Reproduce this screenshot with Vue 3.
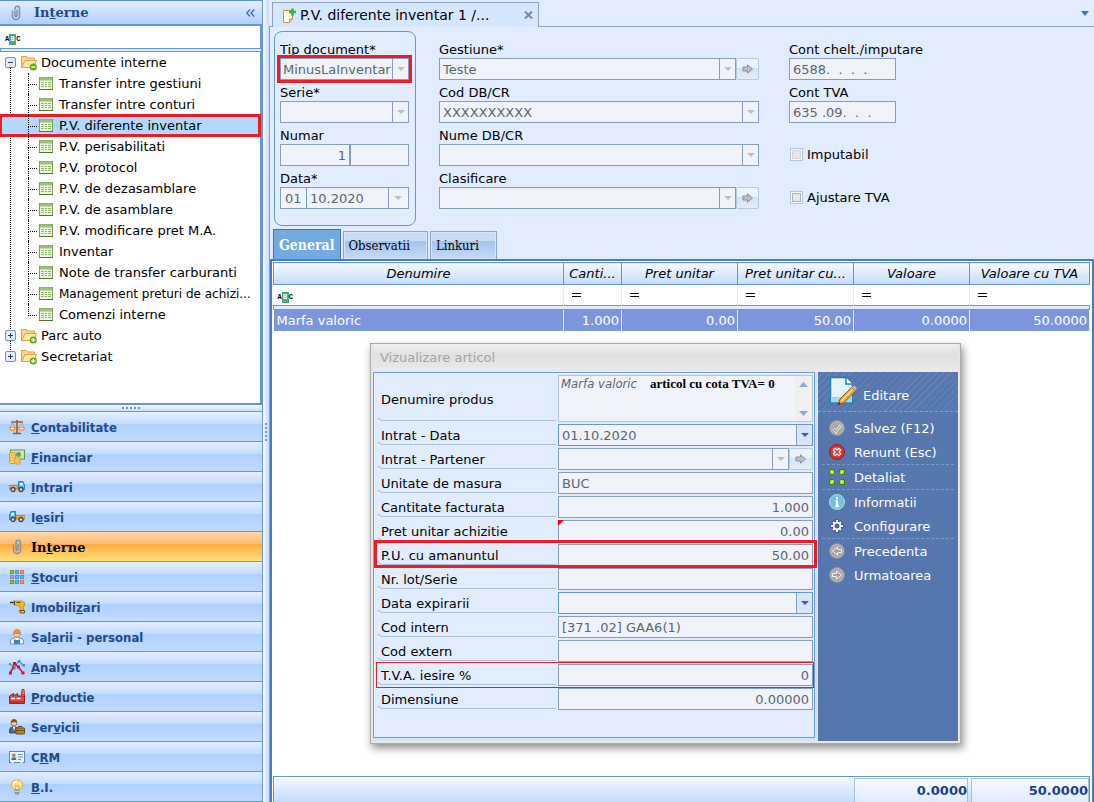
<template>
  <div class="app">
    <aside class="sidebar">
      <header class="side-head">
        <svg class="icon" viewBox="0 0 16 16" v-html="icons.clip"></svg>
        <h2>In<u>t</u>erne</h2>
        <button type="button" class="collapse" aria-label="Restrange">
          <svg width="9" height="8" viewBox="0 0 9 8" fill="none" stroke="#3a69ad" stroke-width="1.300"><path d="M4 .5.8 4 4 7.500M8.200.5 5 4l3.200 3.500" /></svg>
        </button>
      </header>
      <div class="side-filter"><span class="abc">A<b>B</b>C</span></div>
      <div class="double-line"></div>

      <nav class="tree">
        <ul class="roots">
          <li v-for="root in tree" :key="root.name" class="root">
            <button type="button" class="node root-node">
              <svg class="expander" viewBox="0 0 11 11">
                <rect x=".5" y=".5" width="10" height="10" rx="1.500" fill="#e3ebf6" stroke="#7890b8" />
                <path d="M3 5.500h5" stroke="#23406f" />
                <path v-if="!root.open" d="M5.500 3v5" stroke="#23406f" />
              </svg>
              <svg class="folder" viewBox="0 0 16 16">
                <path d="M.5 12.500V1.500h5l1 1.500h7v3" fill="#fbd98a" stroke="#d7a04a" />
                <path d="M.8 12.500 4 5.500h11.500l-3 7z" fill="#fde9b0" stroke="#d7a04a" />
                <circle cx="12.300" cy="12" r="3.600" fill="#62a80d" />
                <path d="M10.200 12h4.200" stroke="#fff" stroke-width="1.400" />
                <path v-if="!root.open" d="M12.300 9.900v4.200" stroke="#fff" stroke-width="1.400" />
              </svg>
              <span>{{ root.name }}</span>
            </button>
            <ul v-if="root.open" class="leaves">
              <li v-for="leaf in root.items" :key="leaf" class="leaf">
                <button type="button" class="node leaf-node" :class="{ selected: leaf === current }">
                  <svg class="sheet" viewBox="0 0 14 13">
                    <rect x=".5" y=".5" width="13" height="12" fill="#eef6e2" stroke="#7ba354" />
                    <path d="M1 2h12" stroke="#9cc178" stroke-width="3" />
                    <path d="M2 5.500h3m1 0h2m1 0h3M2 7.500h3m1 0h2m1 0h3M2 9.500h3m1 0h2m1 0h3" stroke="#8db868" />
                    <path d="M0 12.500h14" stroke="#4f7528" />
                  </svg>
                  <span class="leaf-text" :class="{ long: leaf.length > 28 }">{{ leaf }}</span>
                </button>
              </li>
            </ul>
          </li>
        </ul>
      </nav>

      <div class="grip"><i v-for="n in 5" :key="n"></i></div>

      <nav class="modules">
        <button
          v-for="m in modules"
          :key="m.icon"
          type="button"
          class="module"
          :class="{ active: m.icon === 'clip' }"
        >
          <svg class="icon" viewBox="0 0 16 16" v-html="icons[m.icon]"></svg>
          <span>{{ m.text[0] }}<u>{{ m.text[1] }}</u>{{ m.text[2] }}</span>
        </button>
      </nav>
    </aside>

    <div class="splitter"><i v-for="n in 5" :key="n"></i></div>

    <main class="main">
      <div class="doc-tabs">
        <div class="doc-tab">
          <svg width="13" height="15" viewBox="0 0 13 15">
            <path d="M.5 2.500h9V11l-3 3.500h-6z" fill="#fffdf2" stroke="#c8933a" />
            <path d="M6.500 14.500V11h3" fill="#f6d38c" stroke="#c8933a" />
            <path d="M9.500.5v7M6 4h7" stroke="#2fbb3a" stroke-width="2.600" />
          </svg>
          <span>P.V. diferente inventar 1 /...</span>
          <button type="button" class="close" aria-label="Inchide">
            <svg width="9" height="8" viewBox="0 0 9 8"><path d="m1 .5 7 7M8 .5l-7 7" stroke="#7b8794" stroke-width="2" /></svg>
          </button>
        </div>
        <button type="button" class="tab-menu" aria-label="Lista ferestre">
          <svg width="8" height="5" viewBox="0 0 8 5"><path d="M0 0h8L4 5z" fill="#3f74bd" /></svg>
        </button>
      </div>

      <section class="doc">
        <form class="doc-form" @submit.prevent>
          <div class="group">
            <div class="field">
              <label for="tip">Tip document*</label>
              <div class="box marked">
                <select id="tip" disabled><option>MinusLaInventar</option></select>
                <span class="arrow"></span>
              </div>
            </div>
            <div class="field">
              <label for="serie">Serie*</label>
              <div class="box">
                <select id="serie" disabled><option></option></select>
                <span class="arrow"></span>
              </div>
            </div>
            <div class="field">
              <label for="numar">Numar</label>
              <div class="box">
                <input id="numar" class="num-a" value="1" disabled />
                <input class="num-b" aria-label="Numar, sufix" disabled />
              </div>
            </div>
            <div class="field">
              <label for="data">Data*</label>
              <div class="box">
                <input id="data" class="day" value="01" disabled />
                <input class="month" aria-label="Luna si anul" value="10.2020" disabled />
                <button type="button" class="arrow" aria-label="Alege data" disabled></button>
              </div>
            </div>
          </div>

          <div class="partner">
            <div v-for="f in partner" :key="f.id" class="field">
              <label :for="f.id">{{ f.label }}</label>
              <div class="with-go">
                <div class="box">
                  <select :id="f.id" disabled><option>{{ f.value }}</option></select>
                  <span class="arrow"></span>
                </div>
                <button v-if="f.go" type="button" class="go" :aria-label="'Deschide ' + f.label" disabled>
                  <svg width="12" height="10" viewBox="0 0 12 10"><path d="M1 3h4.500V.8L10.500 5l-5 4.200V7H1z" fill="#bcc0c6" stroke="#888e97" /></svg>
                </button>
              </div>
            </div>
          </div>

          <div class="accounts">
            <div class="field">
              <label for="cont1">Cont chelt./imputare</label>
              <div class="box"><input id="cont1" value="6588.  .  .  ." disabled /></div>
            </div>
            <div class="field">
              <label for="cont2">Cont TVA</label>
              <div class="box"><input id="cont2" value="635 .09.  .  ." disabled /></div>
            </div>
            <div class="field check"><label><input type="checkbox" disabled />Imputabil</label></div>
            <div class="field check"><label><input type="checkbox" />Ajustare TVA</label></div>
          </div>
        </form>

        <div class="tabs">
          <button type="button" class="tab on">General</button>
          <button type="button" class="tab">Observatii</button>
          <button type="button" class="tab">Linkuri</button>
        </div>

        <div class="grid">
          <table>
            <colgroup>
              <col />
              <col class="c-qty" />
              <col v-for="n in 3" :key="n" class="c-num" />
              <col class="c-last" />
            </colgroup>
            <thead>
              <tr>
                <th v-for="c in columns" :key="c">{{ c }}</th>
              </tr>
            </thead>
            <tbody>
              <tr class="filter">
                <td><span class="abc">A<b>B</b>C</span></td>
                <td v-for="n in 5" :key="n"><span class="eq"></span></td>
              </tr>
              <tr class="sep"><td colspan="6"></td></tr>
              <tr class="data">
                <td v-for="(v, i) in row" :key="i">{{ v }}</td>
              </tr>
            </tbody>
          </table>
          <div class="totals">
            <span class="total">0.0000</span>
            <span class="total last">50.0000</span>
          </div>
        </div>
      </section>

      <div class="dialog" role="dialog" aria-labelledby="dlg-title">
        <h3 id="dlg-title">Vizualizare articol</h3>
        <div class="dlg-body">
          <form class="dlg-form" @submit.prevent>
            <div
              v-for="f in fields"
              :key="f.id"
              class="row"
              :class="[f.mark, { tall: f.type === 'area' }]"
            >
              <label :for="f.id">{{ f.label }}</label>
              <div v-if="f.type === 'area'" class="box area">
                <textarea :id="f.id" value="Marfa valoric" disabled></textarea>
                <span class="note">articol cu cota TVA= 0</span>
                <span class="scroll">
                  <svg width="9" height="5" viewBox="0 0 9 5"><path d="M0 5h9L4.500 0z" fill="#93a5cd" /></svg>
                  <svg width="9" height="5" viewBox="0 0 9 5"><path d="M0 0h9L4.500 5z" fill="#93a5cd" /></svg>
                </span>
              </div>
              <div v-else-if="f.type === 'date'" class="box date">
                <input :id="f.id" :value="f.value" readonly />
                <button type="button" class="arrow" :aria-label="'Alege ' + f.label"></button>
              </div>
              <div v-else-if="f.type === 'select'" class="with-go">
                <div class="box">
                  <select :id="f.id" disabled><option></option></select>
                  <span class="arrow"></span>
                </div>
                <button type="button" class="go wide" aria-label="Deschide partener" disabled>
                  <svg width="12" height="10" viewBox="0 0 12 10"><path d="M1 3h4.500V.8L10.500 5l-5 4.200V7H1z" fill="#bcc0c6" stroke="#888e97" /></svg>
                </button>
              </div>
              <div v-else class="box" :class="{ flagged: f.flag }">
                <input :id="f.id" :class="{ right: f.num }" :value="f.value" readonly />
              </div>
            </div>
          </form>

          <div class="actions">
            <button type="button" class="edit">
              <svg width="28" height="30" viewBox="0 0 28 30">
                <path d="M1.500 1.500h16l6 6V27h-22z" fill="#e2f3fa" stroke="#1c82b5" stroke-width="1.500" />
                <path d="M2.500 21h20v5h-20z" fill="#a9d6ec" />
                <path d="M17 1.500V8h6.500" fill="#fff" stroke="#1c82b5" stroke-width="1.500" />
                <path d="m9 29 2-6L22.500 11.500l4 3.500L14.500 27z" fill="#f9a72b" stroke="#8c5a20" />
                <path d="m12.500 25 11.500-12" stroke="#ffdf8a" stroke-width="1.500" />
                <path d="m22.500 11.500 2-2q2.500 0 3.500 3l-1.500 2.500z" fill="#d9a3c0" stroke="#9d7691" stroke-width=".6" />
                <path d="m9 29 1-3 2 2z" fill="#333" />
              </svg>
              <span>Editare</span>
            </button>
            <button
              v-for="a in actions"
              :key="a.text"
              type="button"
              class="action"
              :class="{ split: a.split }"
            >
              <svg class="icon" viewBox="0 0 16 16" v-html="icons[a.icon]"></svg>
              <span>{{ a.text }}</span>
            </button>
          </div>
        </div>
      </div>
    </main>
  </div>
</template>

<script setup>
import { ref } from 'vue';

const current = ref('P.V. diferente inventar');

const tree = [
  {
    name: 'Documente interne',
    open: true,
    items: [
      'Transfer intre gestiuni',
      'Transfer intre conturi',
      'P.V. diferente inventar',
      'P.V. perisabilitati',
      'P.V. protocol',
      'P.V. de dezasamblare',
      'P.V. de asamblare',
      'P.V. modificare pret M.A.',
      'Inventar',
      'Note de transfer carburanti',
      'Management preturi de achizi...',
      'Comenzi interne'
    ]
  },
  { name: 'Parc auto', open: false },
  { name: 'Secretariat', open: false }
];

const modules = [
  { icon: 'scales', text: ['', 'C', 'ontabilitate'] },
  { icon: 'money', text: ['', 'F', 'inanciar'] },
  { icon: 'truckIn', text: ['', 'I', 'ntrari'] },
  { icon: 'truckOut', text: ['I', 'e', 'siri'] },
  { icon: 'clip', text: ['In', 't', 'erne'] },
  { icon: 'blocks', text: ['', 'S', 'tocuri'] },
  { icon: 'drill', text: ['Imobili', 'z', 'ari'] },
  { icon: 'worker', text: ['Sa', 'l', 'arii - personal'] },
  { icon: 'chart', text: ['', 'A', 'nalyst'] },
  { icon: 'factory', text: ['', 'P', 'roductie'] },
  { icon: 'service', text: ['Ser', 'v', 'icii'] },
  { icon: 'card', text: ['C', 'R', 'M'] },
  { icon: 'bulb', text: ['', 'B', '.I.'] }
];

const partner = [
  { id: 'gestiune', label: 'Gestiune*', value: 'Teste', go: true },
  { id: 'cod', label: 'Cod DB/CR', value: 'XXXXXXXXXX' },
  { id: 'nume', label: 'Nume DB/CR', value: '' },
  { id: 'clasificare', label: 'Clasificare', value: '', go: true }
];

const columns = ['Denumire', 'Canti...', 'Pret unitar', 'Pret unitar cu...', 'Valoare', 'Valoare cu TVA'];
const row = ['Marfa valoric', '1.000', '0.00', '50.00', '0.0000', '50.0000'];

const fields = [
  { id: 'f-den', label: 'Denumire produs', type: 'area' },
  { id: 'f-data', label: 'Intrat - Data', type: 'date', value: '01.10.2020' },
  { id: 'f-part', label: 'Intrat - Partener', type: 'select' },
  { id: 'f-um', label: 'Unitate de masura', value: 'BUC' },
  { id: 'f-cant', label: 'Cantitate facturata', value: '1.000', num: true },
  { id: 'f-pret', label: 'Pret unitar achizitie', value: '0.00', num: true, flag: true },
  { id: 'f-pu', label: 'P.U. cu amanuntul', value: '50.00', num: true, mark: 'mark-thick' },
  { id: 'f-lot', label: 'Nr. lot/Serie', value: '' },
  { id: 'f-exp', label: 'Data expirarii', type: 'date', value: '' },
  { id: 'f-int', label: 'Cod intern', value: '[371 .02] GAA6(1)' },
  { id: 'f-ext', label: 'Cod extern', value: '' },
  { id: 'f-tva', label: 'T.V.A. iesire %', value: '0', num: true, mark: 'mark-thin' },
  { id: 'f-dim', label: 'Dimensiune', value: '0.00000', num: true }
];

const actions = [
  { icon: 'ok', text: 'Salvez (F12)' },
  { icon: 'cancel', text: 'Renunt (Esc)', split: true },
  { icon: 'expand', text: 'Detaliat', split: true },
  { icon: 'info', text: 'Informatii' },
  { icon: 'gear', text: 'Configurare', split: true },
  { icon: 'prev', text: 'Precedenta' },
  { icon: 'next', text: 'Urmatoarea' }
];

const disc = '<circle cx="8" cy="8" r="7.500" fill="#b9b9b9" stroke="#8e8e8e"/><circle cx="8" cy="8" r="6" fill="#a9a9a9"/>';

const icons = {
  clip: '<path d="M9 4.500v6a1 1 0 0 1-2 0V5.500M4.500 5.500v5.500a3.500 3.500 0 0 0 7 0V3.500a2.200 2.200 0 0 0-4.500 0V5" fill="none" stroke="#8492a6" stroke-width="1.500"/>',
  scales: '<path d="M8 1v13" stroke="#a3552a" stroke-width="1.600"/><path d="M2 3h12M4 14.500h8" stroke="#a3552a" stroke-width="1.300"/><path d="M3.500 3 1 9m2.500-6L6 9m6.500-6L10 9m2.500-6L15 9" stroke="#c98a5a" stroke-width=".8"/><path d="M.5 8.500h6q0 3.500-3 3.500t-3-3.500zM9.500 8.500h6q0 3.500-3 3.500t-3-3.500z" fill="#fcb83c" stroke="#d98a1c" stroke-width=".6"/><path d="M2 9.500h3M11 9.500h3" stroke="#fff0c0"/>',
  money: '<rect x="1.500" y="1" width="14" height="9" fill="#cfe6b4" stroke="#5f9440"/><circle cx="9.500" cy="5.500" r="2.500" fill="#6da14c"/><rect x=".5" y="3.500" width="6" height="11" rx="1" fill="#fbd065" stroke="#dc9a30"/><rect x="5.500" y="9" width="5.500" height="6" rx="1" fill="#fbd065" stroke="#dc9a30"/><path d="M1 6h5M1 8.500h5M1 11h4M6 11.500h5M6 13.500h5" stroke="#e8a83c" stroke-width=".8"/>',
  truckIn: '<path d="M0 6.500h9v3.500H0z" fill="#f8a742" stroke="#bd7624" stroke-width=".8"/><path d="M9.500 10.500v-8h4.500l1.500 3.500v4.500z" fill="#5bb5ea" stroke="#2f7fb8"/><path d="M11 4h2.500l.8 2.500H11z" fill="#e4f5ff"/><circle cx="4" cy="10.500" r="2" fill="#ddd" stroke="#444" stroke-width="1.300"/><circle cx="12" cy="10.500" r="2" fill="#ddd" stroke="#444" stroke-width="1.300"/>',
  truckOut: '<path d="M7 6.500h9v3.500H7z" fill="#f8a742" stroke="#bd7624" stroke-width=".8"/><path d="M6.500 10.500v-8H2L.5 6v4.500z" fill="#5bb5ea" stroke="#2f7fb8"/><path d="M5 4H2.500l-.8 2.500H5z" fill="#e4f5ff"/><circle cx="4" cy="10.500" r="2" fill="#ddd" stroke="#444" stroke-width="1.300"/><circle cx="12" cy="10.500" r="2" fill="#ddd" stroke="#444" stroke-width="1.300"/>',
  blocks: '<g fill="#fff" stroke-width="1.500"><path d="M1.700 1.700h2.600v2.600H1.700zM1.700 11.700h2.600v2.600H1.700z" stroke="#7c9c12"/><path d="M6.700 1.700h2.600v2.600H6.700zM6.700 6.700h2.600v2.600H6.700zM11.700 6.700h2.600v2.600h-2.600zM6.700 11.700h2.600v2.600H6.700z" stroke="#3f97dc"/><path d="M11.700 1.700h2.600v2.600h-2.600zM11.700 11.700h2.600v2.600h-2.600z" stroke="#ee6a45"/><path d="M1.700 6.700h2.600v2.600H1.700z" stroke="#9a77e0"/></g>',
  drill: '<path d="M1 3.500h4" stroke="#333" stroke-width="1.500"/><path d="M4 2h9l2.500 1.500v3l-1.500 1 1 4h-3L10.500 7 5 6z" fill="#fcb813" stroke="#a96d00" stroke-width=".6"/><path d="M5.500 2v4M7.500 3.500h4" stroke="#5a4308"/><path d="M10.500 11.500h5v2.500h-4z" fill="#f6c231" stroke="#6c5212"/>',
  worker: '<path d="M1.500 15v-3q0-3 4-3h5q4 0 4 3v3z" fill="#edf1f5" stroke="#7a8ca0"/><path d="M5 10.500h6v4.500H5z" fill="#3483c5"/><path d="M6.500 9h3v2h-3z" fill="#fff"/><circle cx="8" cy="5" r="3.200" fill="#ffd29c" stroke="#b9722c" stroke-width=".6"/><path d="M4.500 4.500q0-4 3.500-4t3.500 4z" fill="#f8952e" stroke="#bf651a" stroke-width=".6"/>',
  chart: '<path d="m1.500 12 4-3 4-7 2.500 2 2.500 2.500M1 5l4 3" fill="none" stroke="#4a91c2" stroke-width="1.300"/><path d="M9 1h2.500v2.500H9zM4 8h2.500v2.500H4zM13.500 5H16v2.500h-2.500zM0 4h2v2H0z" fill="#4a91c2"/><path d="m1.500 14 4-9.500L9.500 8l4.500 6" fill="none" stroke="#d41717" stroke-width="1.500"/><path d="M0 12.500h3v3H0zM4 3h3v3H4zM8 6.500h3v3H8zM12.500 12.500h3v3h-3z" fill="#d41717"/>',
  factory: '<path d="M12.500 7.500 13 .5h2l.5 7" fill="#f7b4ad" stroke="#b3261d"/><path d="M13 3h2.500M13 5.500h2.500" stroke="#d43a2f"/><path d="M.5 14.500V7l4-2.500V7l4-2.500V7h7v7.500z" fill="#e24b40" stroke="#a51f18"/><path d="M2 9.500h4m1.500 0h4" stroke="#fff" stroke-width="1.600"/><path d="M1 13h14" stroke="#b82a20" stroke-width="1.500"/>',
  service: '<path d="M.5 14v-3q0-3 3.500-3h2q3 0 3 3v3z" fill="#56657a" stroke="#354255" stroke-width=".8"/><path d="m4 8 1 4 1.200-4z" fill="#fff"/><circle cx="5" cy="4" r="3" fill="#f4c592" stroke="#7c4a20" stroke-width=".6"/><path d="M2 4q0-4 3-4t3 4q-2-2-6 0z" fill="#81501f"/><rect x="7" y="9" width="8.500" height="6" rx=".6" fill="#b8842f" stroke="#6f4a12"/><path d="M9.500 9V7.500h3.500V9M7 11.500h8.500" fill="none" stroke="#6f4a12"/>',
  card: '<rect x=".5" y="2.500" width="15" height="11" fill="#f2f8fd" stroke="#5b88b3"/><rect x="2" y="4" width="5.500" height="7" fill="#bfe0f6"/><circle cx="4.800" cy="6.300" r="1.600" fill="#bd7b46"/><path d="M2.500 11q0-2.800 2.300-2.800T7.200 11z" fill="#2673ad"/><path d="M9 5.500h5M9 8h5M9 10.500h3" stroke="#5f8fb8"/><path d="M2.500 13.500h2m7 0h2" stroke="#fff"/>',
  bulb: '<path d="M5.500 10.500Q2 8.500 2.300 5.500 3 1 8 1t5.700 4.500q.3 3-3.200 5z" fill="#ffe49a" stroke="#d9a445"/><path d="M6.500 10 6 6l2 1.200L10 6l-.5 4" fill="none" stroke="#e29a31" stroke-width=".8"/><path d="M4.500 4Q6 2.200 8 2.300" fill="none" stroke="#fff" stroke-width="1.400"/><path d="M5.500 11h5v3l-1 1.500h-3l-1-1.500z" fill="#8b98a6"/><path d="M5.500 12.500h5" stroke="#ced6de"/>',
  ok: disc + '<path d="m4.500 8.500 2.500 3 5-6.500" fill="none" stroke="#fff" stroke-width="2.600"/><path d="m4.500 8.500 2.500 3 5-6.500" fill="none" stroke="#999" stroke-width="1.200"/>',
  cancel: '<circle cx="8" cy="8" r="7.500" fill="#d9302c" stroke="#a31d1b"/><path d="M2.500 6q5.500-5 11 0" fill="#ee7a72"/><path d="m4.800 4.800 6.400 6.400m0-6.400-6.400 6.400" stroke="#fff" stroke-width="3.800"/><path d="m5.500 5.500 5 5m0-5-5 5" stroke="#c22724" stroke-width="1.200"/>',
  expand: '<path d="M.5.5h5V3L4 5.500H.5zM10.500.5h5v5H12L10.500 3zM.5 10.500H4L5.500 13v2.500h-5zM12 10.500h3.500v5h-5V13z" fill="#9be01c" stroke="#427a06"/><path d="m2 2 2.500 2.500M14 2l-2.500 2.500M2 14l2.500-2.500M14 14l-2.500-2.500" stroke="#eaffb0" stroke-width="1.200"/>',
  info: '<circle cx="8" cy="8" r="7.500" fill="#74c2dd" stroke="#a6dded"/><path d="M8 3v2.200M6.500 7.200H8V12M6.200 12.200h3.800" fill="none" stroke="#fff" stroke-width="2"/>',
  gear: '<path d="M8 1.500v13M1.500 8h13M3.500 3.500l9 9m0-9-9 9" stroke="#354a75" stroke-width="3.600"/><path d="M8 2v12M2 8h12M4 4l8 8m0-8-8 8" stroke="#eff2f8" stroke-width="2.200"/><circle cx="8" cy="8" r="4.200" fill="#eff2f8"/><circle cx="8" cy="8" r="2" fill="#5676ae" stroke="#354a75"/>',
  prev: disc + '<path d="M12.500 6.500H8.500V4L3.500 8l5 4V9.500h4z" fill="#a0a0a0" stroke="#f3f3f3"/>',
  next: disc + '<path d="M3.500 6.500h4V4l5 4-5 4V9.500h-4z" fill="#a0a0a0" stroke="#f3f3f3"/>'
};
</script>

<style>
body {
  margin: 0;
}
</style>

<style scoped>
* {
  box-sizing: border-box;
}

.app {
  display: flex;
  min-height: 100vh;
  background: #e1ecff;
  font-family: "DejaVu Sans", Verdana, sans-serif;
  font-size: 13px;
  line-height: 16px;
  color: #000;
}

button, input, select, textarea {
  font: inherit;
  color: inherit;
  margin: 0;
  padding: 0;
  border: 0;
  border-radius: 0;
  background: none;
  opacity: 1;
}

ul {
  list-style: none;
  margin: 0;
  padding: 0;
}

svg {
  display: block;
  flex: none;
}

.icon {
  width: 16px;
  height: 16px;
}

/* sidebar */
.sidebar {
  width: 263px;
  flex: none;
  display: flex;
  flex-direction: column;
  border-right: 1px solid #6794d2;
}

.side-head {
  height: 26px;
  display: flex;
  align-items: center;
  padding: 0 7px 0 8px;
  border-top: 1px solid #5c90d2;
  border-bottom: 2px solid #6794d2;
  background: linear-gradient(#e3eeff, #afd0fc);
}

.side-head h2 {
  flex: 1;
  margin: 0 0 0 10px;
  font: bold 13px/16px "DejaVu Serif", serif;
  color: #214a88;
}

.side-filter {
  height: 22px;
  padding: 3px 5px;
  background: #fff;
  border-right: 2px solid #6794d2;
}

.abc {
  display: inline-flex;
  align-items: center;
  font: bold 7px/10px "Liberation Mono", monospace;
}

.abc b {
  width: 7px;
  height: 11px;
  text-align: center;
  color: #fff;
  background: #45aa85;
}

.double-line {
  height: 4px;
  border: 1px solid #6794d2;
  background: #e1ecff;
}

.tree {
  flex: 1;
  background: #fff;
  border-right: 2px solid #6794d2;
  border-bottom: 2px solid #6794d2;
}

.root {
  position: relative;
}

.root:not(:last-child)::before {
  content: "";
  position: absolute;
  left: 10px;
  top: 10px;
  bottom: -10px;
  border-left: 1px dotted #000;
}

.node {
  position: relative;
  width: 100%;
  height: 21px;
  display: flex;
  align-items: center;
  text-align: left;
}

.root-node {
  padding-left: 5px;
}

.expander {
  width: 11px;
  height: 11px;
}

.folder {
  width: 16px;
  height: 16px;
  margin: 0 4px 0 5px;
}

.leaf {
  position: relative;
}

.leaf::before {
  content: "";
  position: absolute;
  z-index: 1;
  left: 28px;
  top: 0;
  width: 8px;
  height: 11px;
  border-left: 1px dotted #000;
  border-bottom: 1px dotted #000;
}

.leaf:not(:last-child)::after {
  content: "";
  position: absolute;
  z-index: 1;
  left: 28px;
  top: 11px;
  bottom: 0;
  border-left: 1px dotted #000;
}

.leaf-node {
  gap: 6px;
  padding-left: 39px;
}

.leaf-node.selected {
  background: #b2d8ff;
  outline: 3px solid #ed1c24;
  outline-offset: -2px;
}

.leaf-text {
  white-space: nowrap;
}

.leaf-text.long {
  font-size: 12px;
}

.sheet {
  width: 14px;
  height: 13px;
}

.grip {
  height: 6px;
  display: flex;
  justify-content: center;
  align-items: center;
  gap: 2px;
  background: linear-gradient(#f6faff, #c9defa);
}

.grip i, .splitter i {
  width: 2px;
  height: 2px;
  background: #6b93cc;
}

.modules {
  border-bottom: 1px solid #6794d2;
}

.module {
  width: 100%;
  height: 30px;
  display: flex;
  align-items: center;
  gap: 6px;
  padding-left: 9px;
  border-top: 1px solid #6794d2;
  background: linear-gradient(#e3efff 0, #c3dcff 12px, #add1ff 12px, #c0dbff 100%);
  color: #214a88;
  font-family: "DejaVu Sans Condensed", "DejaVu Sans", sans-serif;
  font-weight: bold;
}

.module span, .action span {
  padding-top: 2px;
}

.module.active {
  background: linear-gradient(#ffd9aa 0, #ffbb6e 12px, #ffab3f 12px, #fee17b 100%);
  color: #000;
  font-family: "DejaVu Serif", serif;
}

.splitter {
  width: 6px;
  flex: none;
  display: flex;
  flex-direction: column;
  align-items: center;
  justify-content: center;
  gap: 2px;
  padding-top: 62px;
  background: linear-gradient(90deg, #f6faff, #c3dafa);
}

/* document */
.main {
  position: relative;
  flex: 1;
  min-width: 0;
  display: flex;
  flex-direction: column;
}

.doc-tabs {
  height: 27px;
  display: flex;
  align-items: flex-end;
  justify-content: space-between;
  padding: 0 5px 0 3px;
  border-bottom: 1px solid #8ba0bc;
}

.doc-tab {
  width: 267px;
  height: 25px;
  margin-bottom: -1px;
  display: flex;
  align-items: center;
  padding: 0 5px 0 10px;
  gap: 4px;
  border: 1px solid #8ba0bc;
  border-bottom: 0;
  background: #d5e6ff;
  font-size: 14px;
}

.doc-tab span {
  flex: 1;
  white-space: nowrap;
}

.tab-menu {
  margin-bottom: 10px;
}

.doc {
  flex: 1;
  display: flex;
  flex-direction: column;
  border-left: 1px solid #8ba0bc;
}

.doc-form {
  display: flex;
  align-items: flex-start;
  padding: 4px 4px 0;
}

.group {
  width: 142px;
  height: 195px;
  padding: 5px 6px 0 5px;
  border: 1px solid #6794d2;
  border-radius: 8px;
}

.partner {
  width: 320px;
  margin-left: 23px;
  padding-top: 6px;
}

.accounts {
  margin-left: 30px;
  padding-top: 6px;
}

.field {
  height: 43px;
}

.field label {
  display: block;
  height: 21px;
  line-height: 26px;
  white-space: nowrap;
}

.box {
  position: relative;
  flex: 1;
  min-width: 0;
  display: flex;
  height: 22px;
  border: 1px solid #859ebf;
  background: #f0f4fa;
  color: #5b6670;
}

.box input, .box select {
  flex: 1;
  min-width: 0;
  width: 100%;
  height: 20px;
  padding: 0 3px;
  appearance: none;
  color: #5b6670;
}

.box select {
  padding: 1px 0 0 3px;
}

.group .box select {
  padding-left: 2px;
}

.accounts .box {
  width: 107px;
}

.accounts .box input {
  white-space: pre;
}

.arrow {
  position: relative;
  flex: none;
  width: 16px;
  border-left: 1px solid #859ebf;
}

.arrow::after {
  content: "";
  position: absolute;
  left: 4px;
  top: 8px;
  border: 4px solid transparent;
  border-top-color: #b4bfd0;
  border-bottom: 0;
}

.marked {
  outline: 3px solid #ed1c24;
}

.box .num-a {
  flex: 0 0 70px;
  text-align: right;
  border-right: 2px solid #859ebf;
}

.box .day {
  flex: 0 0 26px;
  padding: 0 4px;
  border-right: 1px solid #6794d2;
}

.month + .arrow {
  width: 20px;
}

.month + .arrow::after {
  left: 5px;
}

.with-go {
  flex: 1;
  display: flex;
}

.go {
  width: 23px;
  height: 22px;
  display: flex;
  align-items: center;
  justify-content: center;
  border: 1px solid #b4c9e2;
  border-radius: 2px;
  background: linear-gradient(#eaf2fc 45%, #d3e3f4 45%, #e3eefa);
}

.check label {
  display: flex;
  align-items: center;
  gap: 4px;
  height: 43px;
  padding: 20px 0 0 1px;
  line-height: 22px;
}

.check input {
  width: 13px;
  height: 13px;
  appearance: none;
  border: 1px solid #b0c5e0;
  background: #e6e7e8;
  box-shadow: inset 0 0 0 1px #f4f6f8, inset 0 0 0 2px #aeb4ba;
}

.check input:disabled {
  box-shadow: inset 0 0 0 1px #f4f6f8, inset 0 0 0 2px #d3d6da;
}

.tabs {
  display: flex;
  align-items: flex-end;
  gap: 2px;
  margin-top: 3px;
  padding-left: 3px;
}

.tab {
  height: 28px;
  padding: 0 17px 0 5px;
  border: 1px solid #8ba6cc;
  border-bottom: 0;
  background: linear-gradient(#c8dcf6 35%, #a4c4ee 35%, #c5dbf7);
  box-shadow: inset 0 0 0 1px #d6e5f8;
  font-family: "DejaVu Serif Condensed", "DejaVu Serif", serif;
}

.tab.on {
  height: 30px;
  padding: 0 5px;
  border-color: #4473b3;
  background: #70abe2;
  box-shadow: none;
  color: #fff;
  font-size: 14px;
  font-weight: bold;
}

.grid {
  flex: 1;
  display: flex;
  flex-direction: column;
  padding: 1px 2px 0 1px;
  border: 2px solid #4a7dc0;
  border-bottom: 0;
  background: #fff;
}

table {
  width: 100%;
  table-layout: fixed;
  border-collapse: collapse;
}

.c-qty {
  width: 58px;
}

.c-num {
  width: 116px;
}

.c-last {
  width: 120px;
}

th {
  height: 22px;
  padding: 0 2px;
  border: 1px solid #6794d2;
  background: linear-gradient(#f5f9ff, #c5dcff);
  font-weight: normal;
  font-style: italic;
  white-space: nowrap;
}

.filter td {
  height: 21px;
  padding: 0 4px;
  border-right: 1px solid #e1ecfa;
}

.filter td:last-child {
  border-right: 0;
}

.eq {
  display: block;
  width: 9px;
  height: 4px;
  margin-left: 4px;
  border: solid #000;
  border-width: 1px 0;
}

.sep td {
  height: 4px;
  padding: 0;
  border: 1px solid #6794d2;
  background: #e1ecff;
}

.data td {
  height: 21px;
  padding: 2px 2px 0 3px;
  border-right: 1px solid #e1ecfa;
  background: #7b96df;
  color: #fff;
  text-align: right;
}

.data td:first-child {
  text-align: left;
}

.totals {
  height: 26px;
  margin-top: auto;
  display: flex;
  justify-content: flex-end;
  gap: 3px;
  padding: 1px 0 0;
  border: 1px solid #6794d2;
  border-bottom: 0;
  background: linear-gradient(#f5f9ff, #c5dcff);
}

.total {
  width: 114px;
  padding: 4px 0 0;
  border: 1px solid #a3bfe6;
  border-bottom: 0;
  background: linear-gradient(#f8fbff, #dfebff);
  color: #1d3f8c;
  font-weight: bold;
  text-align: right;
}

.total.last {
  width: 118px;
}

/* article window */
.dialog {
  position: absolute;
  left: 101px;
  top: 343px;
  width: 591px;
  padding: 0 2px 2px;
  border: 1px solid #aaa;
  background: #e6e6e6;
  box-shadow: 2px 4px 8px rgba(0, 0, 0, 0.45);
}

.dialog h3 {
  margin: 0;
  height: 28px;
  padding-left: 7px;
  font-size: 13px;
  font-weight: normal;
  line-height: 27px;
  color: #a2a2a2;
  background: linear-gradient(#efefef, #e0e0e0 40%, #eaeaea);
}

.dlg-body {
  display: flex;
  background: #d3e3fa;
}

.dlg-form {
  flex: 1;
  margin: 0 3px 3px 0;
  padding: 2px 1px 25px 3px;
  border: 1px solid #6f9bda;
  background: #e1edff;
}

.row {
  position: relative;
  display: flex;
  height: 24px;
}

.row.tall {
  height: 49px;
}

.row label {
  position: relative;
  width: 181px;
  flex: none;
  height: 21px;
  padding-left: 4px;
  line-height: 23px;
}

.row label::before {
  content: "";
  position: absolute;
  left: 5px;
  right: 2px;
  bottom: 0;
  border-bottom: 1px solid #a9c0e2;
}

.row label::after {
  content: "";
  position: absolute;
  left: 0;
  bottom: 1px;
  width: 6px;
  border-top: 1px solid #a9c0e2;
  transform: rotate(30deg);
}

.row.tall label {
  height: 46px;
  line-height: 49px;
}

.area {
  height: 47px;
  border-color: #b0c5e0;
}

.area textarea {
  flex: 1;
  padding: 0 2px;
  resize: none;
  overflow: hidden;
  font: italic 13px/16px "DejaVu Sans Condensed", "DejaVu Sans", sans-serif;
}

.note {
  position: absolute;
  left: 91px;
  top: 0;
  font: bold 13px/16px "Liberation Serif", serif;
  color: #000;
}

.scroll {
  width: 17px;
  display: flex;
  flex-direction: column;
  align-items: center;
  justify-content: space-between;
  padding: 6px 0 5px;
  background: #efefef;
}

.date {
  border-color: #6794d2;
}

.date .arrow {
  background: #d7e5f8;
}

.date .arrow::after {
  border-top-color: #435f8e;
}

.row .right {
  text-align: right;
}

.flagged::before {
  content: "";
  position: absolute;
  left: -1px;
  top: -1px;
  border-top: 6px solid #f00;
  border-right: 6px solid transparent;
}

.go.wide {
  width: 24px;
}

.mark-thick::after, .mark-thin::after {
  content: "";
  position: absolute;
  pointer-events: none;
}

.mark-thick::after {
  inset: -4px -4px 0 -3px;
  border: 3px solid #ed1c24;
}

.mark-thin::after {
  inset: -2px -1px 0 -1px;
  border: 1px solid #ed1c24;
}

.actions {
  width: 140px;
  background: #5676ae;
  color: #fff;
}

.edit {
  width: 100%;
  height: 40px;
  display: flex;
  align-items: center;
  gap: 6px;
  padding-left: 11px;
  margin-bottom: 4px;
  border-bottom: 1px dashed #86a0cb;
  background: repeating-linear-gradient(135deg, #5676ae 0 4px, #6583b7 4px 5px);
}

.edit span {
  padding-top: 8px;
}

.edit svg {
  margin-bottom: 2px;
}

.action {
  width: 132px;
  height: 24px;
  display: flex;
  align-items: center;
  gap: 9px;
  margin-left: 4px;
  padding-left: 7px;
  white-space: nowrap;
}

.action.split {
  height: 25px;
  border-bottom: 1px dashed #7e99c6;
}
</style>
